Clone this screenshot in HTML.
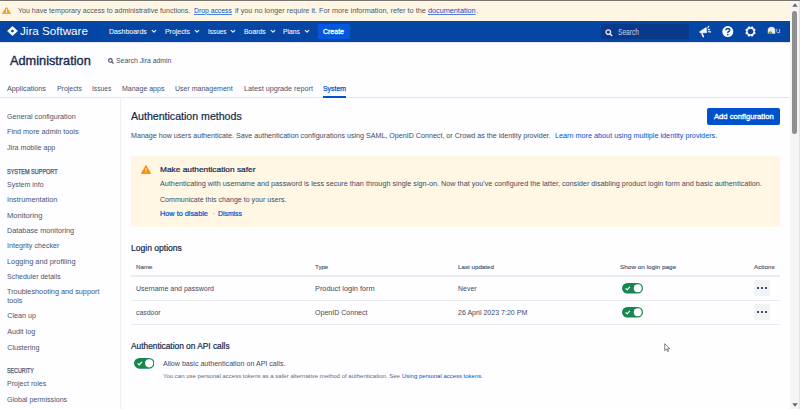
<!DOCTYPE html>
<html><head><meta charset="utf-8"><style>
html,body{margin:0;padding:0;}
body{width:800px;height:409px;overflow:hidden;position:relative;background:#fefdff;font-family:"Liberation Sans",sans-serif;}
.t{position:absolute;white-space:nowrap;line-height:1;}
svg{display:block}
</style></head><body>
<div style="position:absolute;left:0;top:0;width:800px;height:1px;background:#7a736c"></div>
<div style="position:absolute;left:0;top:1px;width:790px;height:20px;background:#fef6e4"></div>
<div style="position:absolute;left:0;top:1px;width:790px;height:1px;background:#fffcf1"></div>
<svg style="position:absolute;left:2px;top:7px" width="9" height="7" viewBox="0 0 9 7"><path d="M4.5 0.8 L8.2 6.3 L0.8 6.3 Z" fill="#f6a02d" stroke="#f6a02d" stroke-width="1.4" stroke-linejoin="round"/><rect x="4" y="2.2" width="1" height="2.3" fill="#fff"/><rect x="4" y="5.1" width="1" height="0.9" fill="#fff"/></svg>
<div class="t" style="left:18.00px;top:7px;font-size:7.4px;font-weight:400;color:#4f5665;transform-origin:0 0;transform:scaleX(0.9546);">You have temporary access to administrative functions.</div>
<div class="t" style="left:193.80px;top:7px;font-size:7.4px;font-weight:400;color:#0052cc;transform-origin:0 0;transform:scaleX(0.9215);text-decoration:underline;text-decoration-thickness:0.7px;text-underline-offset:0.6px;text-decoration-color:#4f80d6;">Drop access</div>
<div class="t" style="left:234.50px;top:7px;font-size:7.4px;font-weight:400;color:#4f5665;transform-origin:0 0;transform:scaleX(0.9838);">if you no longer require it. For more information, refer to the</div>
<div class="t" style="left:428.30px;top:7px;font-size:7.4px;font-weight:400;color:#0052cc;transform-origin:0 0;transform:scaleX(0.9826);text-decoration:underline;text-decoration-thickness:0.7px;text-underline-offset:0.6px;text-decoration-color:#4f80d6;">documentation</div>
<div class="t" style="left:476.50px;top:7px;font-size:7.4px;font-weight:400;color:#4f5665;">.</div>
<div style="position:absolute;left:0;top:21px;width:790px;height:20.5px;background:#0545a3"></div>
<div style="position:absolute;left:0;top:41.5px;width:790px;height:1px;background:#e3e5ea"></div>
<svg style="position:absolute;left:7.3px;top:26.2px" width="11" height="10" viewBox="0 0 11 10"><path d="M5.5 0.3 L10.6 5 L5.5 9.7 L0.4 5 Z" fill="#fff" stroke="#fff" stroke-width="0.4" stroke-linejoin="round"/><circle cx="5.4" cy="5" r="1.35" fill="#0545a3"/></svg>
<div class="t" style="left:20.00px;top:26px;font-size:11.2px;font-weight:400;color:#fff;transform-origin:0 0;transform:scaleX(1.0405);">Jira Software</div>
<div class="t" style="left:109.40px;top:28px;font-size:7.8px;font-weight:400;color:#f0f4fa;transform-origin:0 0;transform:scaleX(0.9000);-webkit-text-stroke:0.1px #f0f4fa;">Dashboards</div>
<svg style="position:absolute;left:151.2px;top:29px" width="6" height="5" viewBox="0 0 6 5"><path d="M1.2 1.4 L3 3.2 L4.8 1.4" stroke="#eef3fb" stroke-width="1.15" fill="none" stroke-linecap="round" stroke-linejoin="round"/></svg>
<div class="t" style="left:164.75px;top:28px;font-size:7.8px;font-weight:400;color:#f0f4fa;transform-origin:0 0;transform:scaleX(0.8874);-webkit-text-stroke:0.1px #f0f4fa;">Projects</div>
<svg style="position:absolute;left:193.8px;top:29px" width="6" height="5" viewBox="0 0 6 5"><path d="M1.2 1.4 L3 3.2 L4.8 1.4" stroke="#eef3fb" stroke-width="1.15" fill="none" stroke-linecap="round" stroke-linejoin="round"/></svg>
<div class="t" style="left:207.50px;top:28px;font-size:7.8px;font-weight:400;color:#f0f4fa;transform-origin:0 0;transform:scaleX(0.8207);-webkit-text-stroke:0.1px #f0f4fa;">Issues</div>
<svg style="position:absolute;left:230.0px;top:29px" width="6" height="5" viewBox="0 0 6 5"><path d="M1.2 1.4 L3 3.2 L4.8 1.4" stroke="#eef3fb" stroke-width="1.15" fill="none" stroke-linecap="round" stroke-linejoin="round"/></svg>
<div class="t" style="left:243.75px;top:28px;font-size:7.8px;font-weight:400;color:#f0f4fa;transform-origin:0 0;transform:scaleX(0.8802);-webkit-text-stroke:0.1px #f0f4fa;">Boards</div>
<svg style="position:absolute;left:269.5px;top:29px" width="6" height="5" viewBox="0 0 6 5"><path d="M1.2 1.4 L3 3.2 L4.8 1.4" stroke="#eef3fb" stroke-width="1.15" fill="none" stroke-linecap="round" stroke-linejoin="round"/></svg>
<div class="t" style="left:283.20px;top:28px;font-size:7.8px;font-weight:400;color:#f0f4fa;transform-origin:0 0;transform:scaleX(0.8612);-webkit-text-stroke:0.1px #f0f4fa;">Plans</div>
<svg style="position:absolute;left:304.0px;top:29px" width="6" height="5" viewBox="0 0 6 5"><path d="M1.2 1.4 L3 3.2 L4.8 1.4" stroke="#eef3fb" stroke-width="1.15" fill="none" stroke-linecap="round" stroke-linejoin="round"/></svg>
<div style="position:absolute;left:318px;top:23.5px;width:32px;height:15px;background:#0457dc;border-radius:1px"></div>
<div class="t" style="left:322.80px;top:28px;font-size:7.8px;font-weight:400;color:#fff;transform-origin:0 0;transform:scaleX(0.8950);-webkit-text-stroke:0.3px #fff;">Create</div>
<div style="position:absolute;left:601px;top:24px;width:88px;height:15px;background:#09398a;border-radius:2px"></div>
<svg style="position:absolute;left:605px;top:28.5px" width="9" height="8" viewBox="0 0 9 8"><circle cx="3.3" cy="3.1" r="2.3" stroke="#dfe4ee" stroke-width="1.3" fill="none"/><path d="M5 4.8 L7.2 7" stroke="#dfe4ee" stroke-width="1.6"/></svg>
<div class="t" style="left:617.75px;top:28px;font-size:8.3px;font-weight:400;color:#cdd5e4;transform-origin:0 0;transform:scaleX(0.7986);">Search</div>
<svg style="position:absolute;left:699px;top:25px" width="13" height="13" viewBox="0 0 13 13"><path d="M0.8 6.6 L7.2 2.4 L7.5 7.7 L0.9 7.7 Z" fill="#fff" stroke="#fff" stroke-width="0.6" stroke-linejoin="round"/><path d="M3 8.6 L4.3 11.6" stroke="#fff" stroke-width="1.5" stroke-linecap="round"/><path d="M8.8 2.9 L9.8 1.3 M9.2 4.6 L10.6 4.6 M9.2 6.7 L11.6 6.9" stroke="#fff" stroke-width="1.1" stroke-linecap="round"/></svg>
<svg style="position:absolute;left:722.4px;top:25.6px" width="12" height="12" viewBox="0 0 12 12"><circle cx="5.8" cy="5.6" r="5.5" fill="#fff"/><path d="M3.9 4.3 Q3.9 2.4 5.8 2.4 Q7.7 2.4 7.7 4.0 Q7.7 5.0 6.5 5.6 Q5.8 6.0 5.8 7.0" stroke="#0545a3" stroke-width="1.45" fill="none"/><circle cx="5.8" cy="8.6" r="0.85" fill="#0545a3"/></svg>
<svg style="position:absolute;left:745.3px;top:25.5px" width="11" height="11" viewBox="0 0 11 11"><path d="M9.77 6.03 L10.67 6.67 L9.98 8.33 L8.89 8.15 L8.15 8.89 L8.33 9.98 L6.67 10.67 L6.03 9.77 L4.97 9.77 L4.33 10.67 L2.67 9.98 L2.85 8.89 L2.11 8.15 L1.02 8.33 L0.33 6.67 L1.23 6.03 L1.23 4.97 L0.33 4.33 L1.02 2.67 L2.11 2.85 L2.85 2.11 L2.67 1.02 L4.33 0.33 L4.97 1.23 L6.03 1.23 L6.67 0.33 L8.33 1.02 L8.15 2.11 L8.89 2.85 L9.98 2.67 L10.67 4.33 L9.77 4.97 Z" fill="#fff"/><circle cx="5.5" cy="5.5" r="2.8" fill="#0545a3"/></svg>
<svg style="position:absolute;left:767px;top:25px" width="15" height="10" viewBox="0 0 15 10"><path d="M0.8 8.7 L0.8 4.6 A3.8 3.8 0 0 1 8.2 4.6 L8.2 8.7 Z" fill="#e8edf5"/><path d="M1 8.7 L1.4 7.4 L3 6.3 L4.8 7.1 L5.6 8.7 Z" fill="#2e9e4f"/><circle cx="3.4" cy="7.6" r="0.6" fill="#f5a623"/><path d="M9.8 3.9 L9.8 6.6 Q9.8 7.8 11.1 7.8 Q12.6 7.8 12.6 6.6 L12.6 3.9 M12.6 6.6 L12.6 7.8" stroke="#b7cbef" stroke-width="0.9" fill="none"/></svg>
<div class="t" style="left:10.25px;top:55px;font-size:12.5px;font-weight:400;color:#172b4d;transform-origin:0 0;transform:scaleX(1.0196);-webkit-text-stroke:0.35px #172b4d;">Administration</div>
<svg style="position:absolute;left:107.5px;top:57.5px" width="6" height="6" viewBox="0 0 6 6"><circle cx="2.4" cy="2.4" r="1.8" stroke="#42526e" stroke-width="1.1" fill="none"/><path d="M3.6 3.6 L5.5 5.5" stroke="#42526e" stroke-width="1.2"/></svg>
<div class="t" style="left:115.80px;top:57px;font-size:7.8px;font-weight:400;color:#42526e;transform-origin:0 0;transform:scaleX(0.8813);">Search Jira admin</div>
<div class="t" style="left:7.20px;top:85px;font-size:7.4px;font-weight:400;color:#42526e;transform-origin:0 0;transform:scaleX(0.9774);">Applications</div>
<div class="t" style="left:56.70px;top:85px;font-size:7.4px;font-weight:400;color:#42526e;transform-origin:0 0;transform:scaleX(0.9353);">Projects</div>
<div class="t" style="left:91.75px;top:85px;font-size:7.4px;font-weight:400;color:#42526e;transform-origin:0 0;transform:scaleX(0.9001);">Issues</div>
<div class="t" style="left:121.75px;top:85px;font-size:7.4px;font-weight:400;color:#42526e;transform-origin:0 0;transform:scaleX(0.9466);">Manage apps</div>
<div class="t" style="left:175.00px;top:85px;font-size:7.4px;font-weight:400;color:#42526e;transform-origin:0 0;transform:scaleX(0.9479);">User management</div>
<div class="t" style="left:243.70px;top:85px;font-size:7.4px;font-weight:400;color:#42526e;transform-origin:0 0;transform:scaleX(0.9751);">Latest upgrade report</div>
<div class="t" style="left:323.20px;top:85px;font-size:7.4px;font-weight:400;color:#0052cc;transform-origin:0 0;transform:scaleX(0.9322);-webkit-text-stroke:0.25px #0052cc;">System</div>
<div style="position:absolute;left:0;top:97px;width:790px;height:1px;background:#e4e6ea"></div>
<div style="position:absolute;left:323px;top:96px;width:23px;height:2px;background:#0052cc"></div>
<div style="position:absolute;left:120px;top:98px;width:1px;height:311px;background:#eeeff2"></div>
<div class="t" style="left:7.20px;top:113px;font-size:7.2px;font-weight:400;color:#465570;transform-origin:0 0;transform:scaleX(0.9993);">General configuration</div>
<div class="t" style="left:7.20px;top:128px;font-size:7.2px;font-weight:400;color:#465570;transform-origin:0 0;transform:scaleX(1.0066);">Find more admin tools</div>
<div class="t" style="left:7.20px;top:144px;font-size:7.2px;font-weight:400;color:#465570;transform-origin:0 0;transform:scaleX(0.9913);">Jira mobile app</div>
<div class="t" style="left:7.20px;top:181px;font-size:7.2px;font-weight:400;color:#465570;transform-origin:0 0;transform:scaleX(0.9731);">System info</div>
<div class="t" style="left:7.20px;top:196px;font-size:7.2px;font-weight:400;color:#465570;transform-origin:0 0;transform:scaleX(1.0175);">Instrumentation</div>
<div class="t" style="left:7.20px;top:212px;font-size:7.2px;font-weight:400;color:#465570;transform-origin:0 0;transform:scaleX(1.0560);">Monitoring</div>
<div class="t" style="left:7.20px;top:227px;font-size:7.2px;font-weight:400;color:#465570;transform-origin:0 0;transform:scaleX(1.0114);">Database monitoring</div>
<div class="t" style="left:7.20px;top:242px;font-size:7.2px;font-weight:400;color:#465570;transform-origin:0 0;transform:scaleX(0.9940);">Integrity checker</div>
<div class="t" style="left:7.20px;top:258px;font-size:7.2px;font-weight:400;color:#465570;transform-origin:0 0;transform:scaleX(1.0276);">Logging and profiling</div>
<div class="t" style="left:7.20px;top:273px;font-size:7.2px;font-weight:400;color:#465570;transform-origin:0 0;transform:scaleX(0.9741);">Scheduler details</div>
<div class="t" style="left:7.20px;top:288px;font-size:7.2px;font-weight:400;color:#465570;transform-origin:0 0;transform:scaleX(1.0132);">Troubleshooting and support</div>
<div class="t" style="left:7.20px;top:297px;font-size:7.2px;font-weight:400;color:#465570;">tools</div>
<div class="t" style="left:7.20px;top:312px;font-size:7.2px;font-weight:400;color:#465570;">Clean up</div>
<div class="t" style="left:7.20px;top:328px;font-size:7.2px;font-weight:400;color:#465570;">Audit log</div>
<div class="t" style="left:7.20px;top:344px;font-size:7.2px;font-weight:400;color:#465570;">Clustering</div>
<div class="t" style="left:7.20px;top:380px;font-size:7.2px;font-weight:400;color:#465570;transform-origin:0 0;transform:scaleX(0.9821);">Project roles</div>
<div class="t" style="left:7.20px;top:396px;font-size:7.2px;font-weight:400;color:#465570;transform-origin:0 0;transform:scaleX(0.9833);">Global permissions</div>
<div class="t" style="left:7.10px;top:169px;font-size:6.6px;font-weight:400;color:#465570;transform-origin:0 0;transform:scaleX(0.8328);-webkit-text-stroke:0.25px #465570;">SYSTEM SUPPORT</div>
<div class="t" style="left:7.15px;top:368px;font-size:6.6px;font-weight:400;color:#465570;transform-origin:0 0;transform:scaleX(0.8076);-webkit-text-stroke:0.25px #465570;">SECURITY</div>
<div class="t" style="left:131.20px;top:112px;font-size:10.4px;font-weight:400;color:#172b4d;transform-origin:0 0;transform:scaleX(1.0194);-webkit-text-stroke:0.22px #172b4d;">Authentication methods</div>
<div class="t" style="left:131.20px;top:132px;font-size:7.2px;font-weight:400;color:#3d4b63;transform-origin:0 0;transform:scaleX(0.9916);">Manage how users authenticate. Save authentication configurations using SAML, OpenID Connect, or Crowd as the identity provider.</div>
<div class="t" style="left:555.00px;top:132px;font-size:7.2px;font-weight:400;color:#0052cc;transform-origin:0 0;transform:scaleX(1.0075);">Learn more about using multiple identity providers.</div>
<div style="position:absolute;left:707px;top:108px;width:73px;height:16.5px;background:#0052cc;border-radius:2px"></div>
<div class="t" style="left:714.00px;top:113px;font-size:7.6px;font-weight:400;color:#fff;transform-origin:0 0;transform:scaleX(1.0093);-webkit-text-stroke:0.3px #fff;">Add configuration</div>
<div style="position:absolute;left:131px;top:156px;width:649px;height:71px;background:#fff7e4;border-radius:2px"></div>
<svg style="position:absolute;left:140.5px;top:164.5px" width="10" height="9" viewBox="0 0 10 9"><path d="M5 0.6 L9.5 8.4 L0.5 8.4 Z" fill="#ff8b00" stroke="#ff8b00" stroke-width="1" stroke-linejoin="round"/><rect x="4.5" y="3" width="1" height="2.8" fill="#fff7e4"/><rect x="4.5" y="6.5" width="1" height="1" fill="#fff7e4"/></svg>
<div class="t" style="left:160.20px;top:166px;font-size:7.8px;font-weight:400;color:#172b4d;transform-origin:0 0;transform:scaleX(1.0692);-webkit-text-stroke:0.22px #172b4d;">Make authentication safer</div>
<div class="t" style="left:160.20px;top:180px;font-size:7.2px;font-weight:400;color:#3d4b63;transform-origin:0 0;transform:scaleX(1.0066);">Authenticating with username and password is less secure than through single sign-on. Now that you've configured the latter, consider disabling product login form and basic authentication.</div>
<div class="t" style="left:160.20px;top:196px;font-size:7.2px;font-weight:400;color:#3d4b63;transform-origin:0 0;transform:scaleX(0.9840);">Communicate this change to your users.</div>
<div class="t" style="left:160.20px;top:210px;font-size:7.4px;font-weight:400;color:#0052cc;transform-origin:0 0;transform:scaleX(0.9889);-webkit-text-stroke:0.22px #0052cc;">How to disable</div>
<div class="t" style="left:212.50px;top:210px;font-size:7.2px;font-weight:400;color:#6b778c;">·</div>
<div class="t" style="left:217.70px;top:210px;font-size:7.4px;font-weight:400;color:#0052cc;transform-origin:0 0;transform:scaleX(0.9266);-webkit-text-stroke:0.22px #0052cc;">Dismiss</div>
<div class="t" style="left:131.00px;top:244px;font-size:8.3px;font-weight:400;color:#172b4d;transform-origin:0 0;transform:scaleX(1.0309);-webkit-text-stroke:0.22px #172b4d;">Login options</div>
<div class="t" style="left:136.25px;top:264px;font-size:6.2px;font-weight:400;color:#46536b;transform-origin:0 0;transform:scaleX(0.9975);-webkit-text-stroke:0.12px #46536b;">Name</div>
<div class="t" style="left:315.30px;top:264px;font-size:6.2px;font-weight:400;color:#46536b;transform-origin:0 0;transform:scaleX(0.9820);-webkit-text-stroke:0.12px #46536b;">Type</div>
<div class="t" style="left:457.90px;top:264px;font-size:6.2px;font-weight:400;color:#46536b;transform-origin:0 0;transform:scaleX(1.0041);-webkit-text-stroke:0.12px #46536b;">Last updated</div>
<div class="t" style="left:619.50px;top:264px;font-size:6.2px;font-weight:400;color:#46536b;transform-origin:0 0;transform:scaleX(1.0337);-webkit-text-stroke:0.12px #46536b;">Show on login page</div>
<div class="t" style="left:753.70px;top:264px;font-size:6.2px;font-weight:400;color:#46536b;transform-origin:0 0;transform:scaleX(1.0182);-webkit-text-stroke:0.12px #46536b;">Actions</div>
<div style="position:absolute;left:131px;top:275px;width:649px;height:2px;background:#ebecf0"></div>
<div style="position:absolute;left:131px;top:300px;width:649px;height:1px;background:#ebecf0"></div>
<div style="position:absolute;left:131px;top:324px;width:649px;height:1px;background:#ebecf0"></div>
<div class="t" style="left:136.00px;top:285px;font-size:7.2px;font-weight:400;color:#3d4b63;transform-origin:0 0;transform:scaleX(0.9745);">Username and password</div>
<div class="t" style="left:315.30px;top:285px;font-size:7.2px;font-weight:400;color:#3d4b63;transform-origin:0 0;transform:scaleX(1.0218);">Product login form</div>
<div class="t" style="left:457.90px;top:285px;font-size:7.2px;font-weight:400;color:#3d4b63;transform-origin:0 0;transform:scaleX(0.9683);">Never</div>
<div class="t" style="left:136.00px;top:309px;font-size:7.2px;font-weight:400;color:#3d4b63;transform-origin:0 0;transform:scaleX(0.9603);">casdoor</div>
<div class="t" style="left:315.30px;top:309px;font-size:7.2px;font-weight:400;color:#3d4b63;transform-origin:0 0;transform:scaleX(0.9807);">OpenID Connect</div>
<div class="t" style="left:457.90px;top:309px;font-size:7.2px;font-weight:400;color:#3d4b63;transform-origin:0 0;transform:scaleX(0.9796);">26 April 2023 7:20 PM</div>
<svg style="position:absolute;left:622.3px;top:283px" width="21" height="10.5" viewBox="0 0 21 10.5"><rect x="0" y="0" width="21" height="10.5" rx="5.25" fill="#17874f"/><circle cx="15.75" cy="5.25" r="3.95" fill="#fff"/><path d="M3.6 5.4 L5.2 6.9 L7.9 3.9" stroke="#fff" stroke-width="1.3" fill="none"/></svg>
<svg style="position:absolute;left:622.3px;top:307px" width="21" height="10.5" viewBox="0 0 21 10.5"><rect x="0" y="0" width="21" height="10.5" rx="5.25" fill="#17874f"/><circle cx="15.75" cy="5.25" r="3.95" fill="#fff"/><path d="M3.6 5.4 L5.2 6.9 L7.9 3.9" stroke="#fff" stroke-width="1.3" fill="none"/></svg>
<div style="position:absolute;left:754px;top:280px;width:16px;height:16px;background:#f1f2f4;border-radius:2px"></div><svg style="position:absolute;left:754px;top:280px" width="16" height="16" viewBox="0 0 16 16"><circle cx="4" cy="8" r="1.1" fill="#172b4d"/><circle cx="8" cy="8" r="1.1" fill="#172b4d"/><circle cx="12" cy="8" r="1.1" fill="#172b4d"/></svg>
<div style="position:absolute;left:754px;top:304px;width:16px;height:16px;background:#f1f2f4;border-radius:2px"></div><svg style="position:absolute;left:754px;top:304px" width="16" height="16" viewBox="0 0 16 16"><circle cx="4" cy="8" r="1.1" fill="#172b4d"/><circle cx="8" cy="8" r="1.1" fill="#172b4d"/><circle cx="12" cy="8" r="1.1" fill="#172b4d"/></svg>
<div class="t" style="left:131.30px;top:342px;font-size:8.6px;font-weight:400;color:#172b4d;transform-origin:0 0;transform:scaleX(0.9692);-webkit-text-stroke:0.22px #172b4d;">Authentication on API calls</div>
<svg style="position:absolute;left:133.7px;top:358px" width="20.5" height="10.7" viewBox="0 0 20.5 10.7"><rect x="0" y="0" width="20.5" height="10.7" rx="5.35" fill="#17874f"/><circle cx="15.15" cy="5.35" r="4.05" fill="#fff"/><path d="M3.6 5.4 L5.2 6.9 L7.9 3.9" stroke="#fff" stroke-width="1.3" fill="none"/></svg>
<div class="t" style="left:163.10px;top:360px;font-size:7.8px;font-weight:400;color:#3d4b63;transform-origin:0 0;transform:scaleX(0.9084);">Allow basic authentication on API calls.</div>
<div class="t" style="left:163.10px;top:373px;font-size:6.2px;font-weight:400;color:#5e6c84;transform-origin:0 0;transform:scaleX(0.9738);">You can use personal access tokens as a safer alternative method of authentication. See</div>
<div class="t" style="left:402.00px;top:373px;font-size:6.2px;font-weight:400;color:#0052cc;transform-origin:0 0;transform:scaleX(0.9632);">Using personal access tokens.</div>
<svg style="position:absolute;left:664.3px;top:342.8px" width="8" height="10" viewBox="0 0 8 10"><path d="M0.7 0.7 L0.7 7.6 L2.4 6.1 L3.6 8.6 L4.6 8.1 L3.5 5.7 L5.9 5.7 Z" fill="#fff" stroke="#5a5a5a" stroke-width="0.75" stroke-linejoin="round"/></svg>
<div style="position:absolute;left:790px;top:1px;width:10px;height:408px;background:#f5f5f5"></div>
<div style="position:absolute;left:799px;top:1px;width:1px;height:408px;background:#e2e2e2"></div>
<div style="position:absolute;left:792px;top:10.5px;width:5px;height:123px;background:#8f8f8f;border-radius:3px"></div>
<svg style="position:absolute;left:792px;top:3px" width="6" height="4" viewBox="0 0 6 4"><path d="M3 0.3 L5.8 3.7 L0.2 3.7 Z" fill="#666"/></svg>
<svg style="position:absolute;left:792px;top:403px" width="6" height="4" viewBox="0 0 6 4"><path d="M3 3.7 L5.8 0.3 L0.2 0.3 Z" fill="#666"/></svg>
</body></html>
